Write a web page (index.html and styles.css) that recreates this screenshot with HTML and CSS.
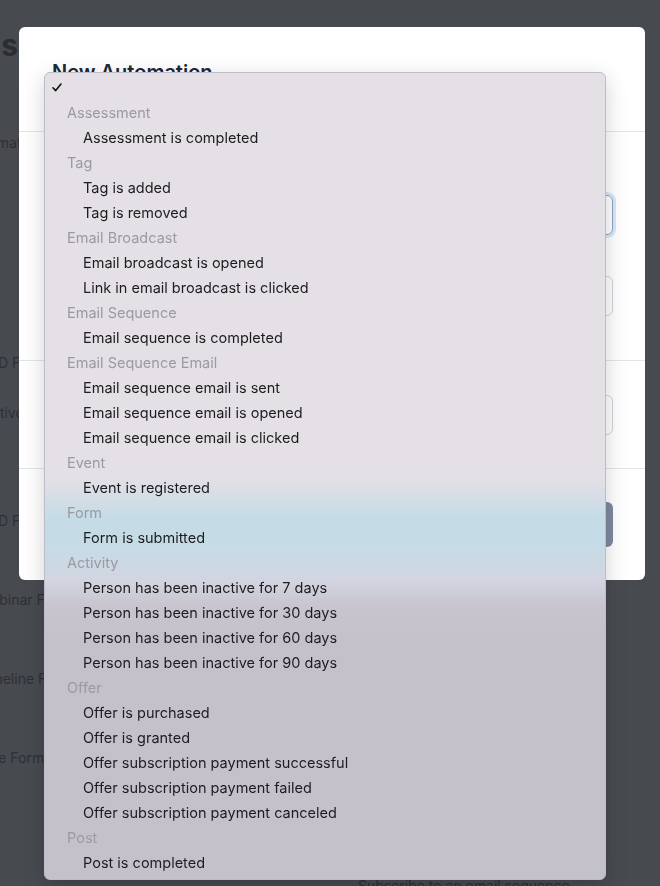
FILE: index.html
```html
<!DOCTYPE html>
<html lang="en">
<head>
    <meta charset="UTF-8">
    <meta name="viewport" content="width=device-width, initial-scale=1.0">
    <title>New Automation</title>
    <link rel="stylesheet" href="styles.css">
</head>
<body>

    <!-- page behind the modal -->
    <div class="page">
        <h1 class="page-title">Automations</h1>
        <div class="table-head">Automation</div>
        <div class="table">
            <div class="row">
                <div class="cell-name">VOD Form<span class="status">Inactive</span></div>
                <div class="cell-trigger"></div>
            </div>
            <div class="row">
                <div class="cell-name"></div>
                <div class="cell-trigger"></div>
            </div>
            <div class="row">
                <div class="cell-name">VOD Form</div>
                <div class="cell-trigger"></div>
            </div>
            <div class="row">
                <div class="cell-name">Webinar Form</div>
                <div class="cell-trigger"></div>
            </div>
            <div class="row">
                <div class="cell-name">Timeline Form</div>
                <div class="cell-trigger"></div>
            </div>
            <div class="row">
                <div class="cell-name">Sale Form</div>
                <div class="cell-trigger"></div>
            </div>
            <div class="row">
                <div class="cell-name"></div>
                <div class="cell-trigger">Subscribe to an email sequence</div>
            </div>
        </div>
    </div>

    <div class="backdrop"></div>

    <div class="modal">
        <div class="modal-header">
            <h2>New Automation</h2>
        </div>
        <div class="modal-section">
            <div class="field">
                <label>When this happens</label>
                <div class="select is-focused">Select a trigger<span class="chevron"></span></div>
            </div>
            <div class="field">
                <label>Filter</label>
                <div class="select">Any<span class="chevron"></span></div>
            </div>
        </div>
        <div class="modal-section inline">
            <label>Then do this</label>
            <div class="select">Select an action<span class="chevron"></span></div>
        </div>
        <div class="modal-footer">
            <button class="btn-primary" disabled>Save Automation</button>
        </div>
    </div>

    <!-- native select popup -->
    <div class="menu">
        <div class="menu-item checked"><svg width="10" height="9" viewBox="0 0 10 9"><path d="M1 4.8 L3.7 7.6 L9 1" fill="none" stroke="#111" stroke-width="1.6" stroke-linecap="round" stroke-linejoin="round"/></svg></div>
        <div class="menu-group">Assessment</div>
        <div class="menu-item">Assessment is completed</div>
        <div class="menu-group">Tag</div>
        <div class="menu-item">Tag is added</div>
        <div class="menu-item">Tag is removed</div>
        <div class="menu-group">Email Broadcast</div>
        <div class="menu-item">Email broadcast is opened</div>
        <div class="menu-item">Link in email broadcast is clicked</div>
        <div class="menu-group">Email Sequence</div>
        <div class="menu-item">Email sequence is completed</div>
        <div class="menu-group">Email Sequence Email</div>
        <div class="menu-item">Email sequence email is sent</div>
        <div class="menu-item">Email sequence email is opened</div>
        <div class="menu-item">Email sequence email is clicked</div>
        <div class="menu-group">Event</div>
        <div class="menu-item">Event is registered</div>
        <div class="menu-group">Form</div>
        <div class="menu-item">Form is submitted</div>
        <div class="menu-group">Activity</div>
        <div class="menu-item">Person has been inactive for 7 days</div>
        <div class="menu-item">Person has been inactive for 30 days</div>
        <div class="menu-item">Person has been inactive for 60 days</div>
        <div class="menu-item">Person has been inactive for 90 days</div>
        <div class="menu-group">Offer</div>
        <div class="menu-item">Offer is purchased</div>
        <div class="menu-item">Offer is granted</div>
        <div class="menu-item">Offer subscription payment successful</div>
        <div class="menu-item">Offer subscription payment failed</div>
        <div class="menu-item">Offer subscription payment canceled</div>
        <div class="menu-group">Post</div>
        <div class="menu-item">Post is completed</div>
    </div>

</body>
</html>
```

FILE: styles.css
```css
html, body {
    height: 100%;
}
body {
    margin: 0;
    font-family: Inter, "Noto Sans", sans-serif;
    background-color: #fff;
    color: #333;
    overflow: hidden;
}

/* page behind */
.page {
    padding-top: 25px;
}
.page-title {
    margin: 0 0 0 -282px;
    width: 300px;
    text-align: right;
    font-size: 30px;
    line-height: 40px;
    font-weight: 700;
    color: #222;
}
.table-head {
    margin: 68px 0 0 -34px;
    font-size: 14px;
    line-height: 20px;
}
.table {
    margin-top: 200px;
}
.row {
    display: grid;
    grid-template-columns: 358px 1fr;
    height: 79px;
    font-size: 14px;
    line-height: 20px;
}
.cell-name {
    margin-left: -22px;
}
.status {
    display: block;
    margin-top: 30px;
    margin-left: -6px;
}
.cell-trigger {
    padding-top: 49px;
}

.backdrop {
    position: fixed;
    inset: 0;
    background-color: rgba(44, 47, 53, 0.87);
}

/* modal */
.modal {
    position: fixed;
    left: 19px;
    top: 27px;
    width: 626px;
    height: 553px;
    background-color: #fff;
    border-radius: 6px;
    box-sizing: border-box;
    display: flex;
    flex-direction: column;
}
.modal-header {
    padding: 31px 32px 0 33px;
    height: 105px;
    box-sizing: border-box;
    border-bottom: 1px solid #e2e4ec;
}
.modal-header h2 {
    margin: 0;
    font-size: 20px;
    line-height: 28px;
    font-weight: 600;
    color: #1f2937;
}
.modal-section {
    padding: 37px 32px 44px 33px;
    border-bottom: 1px solid #e2e4ec;
    display: flex;
    flex-direction: column;
    gap: 15px;
}
.modal-section.inline {
    flex-direction: row;
    align-items: center;
    padding: 34px 32px 33px 33px;
    gap: 24px;
}
.modal-section.inline label {
    width: 160px;
}
.modal-section.inline .select {
    flex: 1;
}
.field label,
.modal-section label {
    display: block;
    font-size: 14px;
    line-height: 20px;
    margin-bottom: 6px;
    color: #374151;
}
.select {
    position: relative;
    height: 40px;
    box-sizing: border-box;
    border: 1px solid #cfd3dc;
    border-radius: 6px;
    padding: 0 30px 0 12px;
    font-size: 14px;
    line-height: 38px;
    color: #111;
}
.select.is-focused {
    border-color: #8fa4c4;
    box-shadow: 0 0 0 3px rgba(164, 202, 254, 0.45);
}
.chevron {
    position: absolute;
    right: 6px;
    top: 17px;
    width: 3px;
    height: 3px;
    border-radius: 50%;
    background-color: #333;
}
.modal-footer {
    padding: 33px 32px;
    display: flex;
    justify-content: flex-end;
}
.btn-primary {
    height: 45px;
    padding: 0 22px;
    border: none;
    border-radius: 6px;
    background-color: #8089a0;
    color: #fff;
    font-family: inherit;
    font-size: 15px;
    font-weight: 600;
}

/* select popup */
.menu {
    position: fixed;
    left: 44px;
    top: 72px;
    width: 562px;
    height: 808px;
    box-sizing: border-box;
    padding-top: 2px;
    border: 1px solid #bdbcc9;
    border-radius: 6px;
    background: linear-gradient(to bottom,
        #e4e0e6 0%,
        #e4e0e6 50%,
        #d4dde6 53%,
        #c5dce6 55%,
        #c5dce6 58.5%,
        #d3d5e1 63%,
        #c8c5cf 66%,
        #c4c1cb 70%,
        #c4c1cb 100%);
    box-shadow: 0 6px 22px rgba(0, 0, 0, 0.18);
    font-size: 14.5px;
    line-height: 25px;
}
.menu-item {
    height: 25px;
    padding-left: 38px;
    color: #1d1d1f;
    white-space: nowrap;
}
.menu-item.checked {
    padding-left: 7px;
    display: flex;
    align-items: center;
}
.menu-group {
    height: 25px;
    padding-left: 22px;
    color: #9b99a2;
}
```
